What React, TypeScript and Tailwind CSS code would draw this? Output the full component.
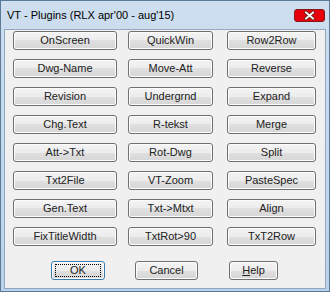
import type { ReactNode } from "react";

const rows: string[][] = [
  ["OnScreen", "QuickWin", "Row2Row"],
  ["Dwg-Name", "Move-Att", "Reverse"],
  ["Revision", "Undergrnd", "Expand"],
  ["Chg.Text", "R-tekst", "Merge"],
  ["Att->Txt", "Rot-Dwg", "Split"],
  ["Txt2File", "VT-Zoom", "PasteSpec"],
  ["Gen.Text", "Txt->Mtxt", "Align"],
  ["FixTitleWidth", "TxtRot>90", "TxT2Row"],
];

// column widths / left margins measured off the dialog
const cols = ["w-[104px] ml-[8px]", "w-[85px] ml-[11px]", "w-[89px] ml-[14px]"];

function Btn({ className = "", children, def = false }: { className?: string; children: ReactNode; def?: boolean }) {
  return (
    <div
      className={`h-[19px] rounded-[3px] border flex items-center justify-center text-[11px] text-[#222] ${
        def ? "border-[#3c7fb1]" : "border-[#707070]"
      } bg-[linear-gradient(to_bottom,#f4f4f4_0%,#ececec_50%,#e0e0e0_50%,#d6d6d6_100%)] shadow-[inset_0_0_0_1px_#fcfcfc] ${className}`}
      style={{ fontFamily: "'Liberation Sans', Arial, sans-serif" }}
    >
      {def ? (
        <div className="w-[calc(100%-6px)] h-[13px] border border-dotted border-black flex items-center justify-center">
          {children}
        </div>
      ) : (
        children
      )}
    </div>
  );
}

function CloseBox() {
  return (
    <div className="w-[31px] h-[13px] rounded-[3px] border border-red-900 bg-red-600 flex items-center justify-center">
      <svg width="11" height="9" viewBox="0 0 11 9">
        <path d="M2 1.5 L9 7.5 M9 1.5 L2 7.5" stroke="#5a2a22" strokeWidth="3.4" strokeLinecap="square" />
        <path d="M2 1.5 L9 7.5 M9 1.5 L2 7.5" stroke="#ffffff" strokeWidth="1.8" strokeLinecap="square" />
      </svg>
    </div>
  );
}

export default function App() {
  return (
    <div className="w-[330px] h-[292px] flex flex-col bg-linear-to-b from-[#cddeef] to-[#bcd2ea] border border-[#5a7a98]">
      {/* Title bar */}
      <div className="h-[28px] flex items-center justify-between pl-[6px] pr-[4px]">
        <span className="text-[11px] text-black" style={{ fontFamily: "'Liberation Sans', Arial, sans-serif" }}>
          VT - Plugins (RLX apr'00 - aug'15)
        </span>
        <CloseBox />
      </div>

      {/* Client area */}
      <div className="flex-1 mx-[3px] mb-[2px] bg-[#f0f0f0] border border-[#8fa9c2] pt-[1px]">
        <div className="flex flex-col gap-[9px]">
          {rows.map((r) => (
            <div key={r[0]} className="flex">
              {r.map((label, i) => (
                <Btn key={label} className={cols[i]}>
                  {label}
                </Btn>
              ))}
            </div>
          ))}
        </div>

        <div className="flex mt-[15px]">
          <Btn def className="w-[54px] ml-[46px]">OK</Btn>
          <Btn className="w-[63px] ml-[30px]">Cancel</Btn>
          <Btn className="w-[49px] ml-[31px]">
            <span>
              <span className="underline">H</span>elp
            </span>
          </Btn>
        </div>
      </div>
    </div>
  );
}
